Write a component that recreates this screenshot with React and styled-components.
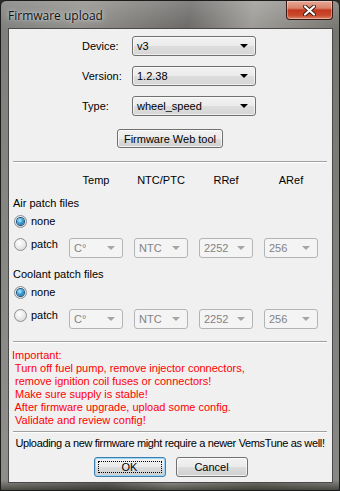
import React from 'react';
import styled, { createGlobalStyle } from 'styled-components';

const Global = createGlobalStyle`
  html, body {
    margin: 0;
    padding: 0;
    background: #2a2a2a;
  }
  body {
    font-family: "Liberation Sans", Arial, sans-serif;
    font-size: 11px;
  }
`;

const Window = styled.div`
  width: 340px;
  height: 491px;
  box-sizing: border-box;
  display: flex;
  flex-direction: column;
  border: 1px solid #1c1c1c;
  border-radius: 6px 6px 2px 2px;
  background:
    linear-gradient(180deg, rgba(255,255,255,0.18), rgba(255,255,255,0) 30px),
    linear-gradient(0deg, rgba(20,20,10,0.55), rgba(0,0,0,0) 10px),
    linear-gradient(100deg, #7d7d7b 0%, #8f8e8a 20%, #6a6866 45%, #9b9a96 60%, #76756f 80%, #8a8986 100%);
  overflow: hidden;
`;

const TitleBar = styled.div`
  height: 27px;
  display: flex;
  align-items: flex-start;
  justify-content: space-between;
  padding-left: 7px;
`;

const Title = styled.div`
  font-family: "Open Sans", "Noto Sans", sans-serif;
  font-size: 12px;
  color: #101010;
  margin-top: 6px;
  text-shadow: 0 0 6px rgba(255,255,255,0.7), 0 0 2px rgba(255,255,255,0.6);
`;

const CloseButton = styled.div`
  width: 45px;
  height: 18px;
  margin-right: 6px;
  border: 1px solid #3a1a14;
  border-top: none;
  border-radius: 0 0 4px 4px;
  background: linear-gradient(180deg, #e7a898 0%, #d9826a 40%, #c4381f 50%, #c94a2e 80%, #e0866a 100%);
  box-shadow: inset 0 0 0 1px rgba(255,255,255,0.35);
  display: flex;
  align-items: center;
  justify-content: center;
`;

const Client = styled.div`
  flex: 1;
  margin: 0 6px 7px 7px;
  border: 1px solid #4a4a4a;
  background: #f0f0f0;
  display: flex;
  flex-direction: column;
  align-items: stretch;
  padding: 7px 5px 0 4px;
  color: #000;
`;

const FormGrid = styled.div`
  display: grid;
  grid-template-columns: 50px 124px;
  row-gap: 10px;
  justify-content: start;
  align-items: center;
  padding-left: 69px;
`;

const Label = styled.div`
  line-height: 13px;
`;

const Combo = styled.div`
  box-sizing: border-box;
  width: ${p => p.width || 124}px;
  height: 20px;
  border: 1px solid ${p => (p.disabled ? '#b2b5b8' : '#707070')};
  border-radius: 3px;
  background: ${p =>
    p.disabled
      ? '#f4f4f4'
      : 'linear-gradient(180deg, #f2f2f2 0%, #ebebeb 50%, #dddddd 51%, #d6d6d6 100%)'};
  color: ${p => (p.disabled ? '#838383' : '#000')};
  display: flex;
  align-items: center;
  justify-content: space-between;
  padding: 0 5px 0 4px;
  box-shadow: ${p => (p.disabled ? 'none' : 'inset 0 0 0 1px rgba(255,255,255,0.6)')};
`;

const Arrow = styled.span`
  width: 0;
  height: 0;
  border-left: 4px solid transparent;
  border-right: 4px solid transparent;
  border-top: 4px solid ${p => (p.disabled ? '#a5a5a5' : '#000')};
  margin-right: 2px;
`;

const Button = styled.div`
  box-sizing: border-box;
  width: ${p => p.width}px;
  height: ${p => p.height || 20}px;
  border: 1px solid ${p => (p.focused ? '#3c7fb1' : '#707070')};
  border-radius: 3px;
  background: linear-gradient(180deg, #f2f2f2 0%, #ebebeb 50%, #dddddd 51%, #cfcfcf 100%);
  box-shadow: inset 0 0 0 1px ${p => (p.focused ? '#9fd5f5' : 'rgba(255,255,255,0.7)')};
  display: flex;
  align-items: center;
  justify-content: center;
  position: relative;
`;

const FocusRect = styled.span`
  position: absolute;
  inset: 3px;
  border: 1px dotted #000;
`;

const CenterRow = styled.div`
  display: flex;
  justify-content: center;
  gap: 10px;
  margin-top: ${p => p.top || 0}px;
  padding-left: ${p => p.shift || 0}px;
`;

const Separator = styled.div`
  height: 1px;
  background: #a0a0a0;
  border-bottom: 1px solid #fff;
  margin: ${p => p.top}px 0 0 0;
`;

const PatchGrid = styled.div`
  display: grid;
  grid-template-columns: 45px repeat(4, 54px);
  column-gap: 11px;
  align-items: center;
  margin-top: ${p => p.top || 0}px;
`;

const HeaderCell = styled.div`
  text-align: center;
  line-height: 13px;
`;

const SectionTitle = styled.div`
  line-height: 13px;
  margin-top: ${p => p.top}px;
`;

const RadioRow = styled.label`
  display: flex;
  align-items: center;
  gap: 4px;
  line-height: 13px;
  margin-top: ${p => p.top || 0}px;
  align-self: start;
`;

const RadioCircle = styled.span`
  box-sizing: border-box;
  width: 13px;
  height: 13px;
  border-radius: 50%;
  border: 1px solid #8c8f91;
  background: radial-gradient(circle at 40% 35%, #ffffff 0%, #eaeaea 50%, #cfcfcf 100%);
  display: flex;
  align-items: center;
  justify-content: center;
  margin-left: 1px;
`;

const RadioDot = styled.span`
  width: 7px;
  height: 7px;
  border-radius: 50%;
  background: radial-gradient(circle at 40% 35%, #b9f0ff 0%, #3ea0d8 45%, #0d4f86 100%);
  box-shadow: 0 0 0 1px #1a4f7a;
`;

const Warning = styled.div`
  color: #ff0000;
  line-height: 13px;
  margin: 6px 0 0 -1px;
  white-space: pre;
`;

const Note = styled.div`
  text-align: center;
  line-height: 13px;
  margin-top: 4px;
  white-space: nowrap;
  letter-spacing: -0.35px;
  margin-left: -4px;
  margin-right: -4px;
`;

const Radio = ({ checked, label, top }) => (
  <RadioRow top={top}>
    <RadioCircle>{checked && <RadioDot />}</RadioCircle>
    {label}
  </RadioRow>
);

const PatchSection = ({ title, top }) => (
  <>
    <SectionTitle top={top}>{title}</SectionTitle>
    <Radio checked label="none" top={5} />
    <PatchGrid top={10}>
      <Radio label="patch" />
      {['C°', 'NTC', '2252', '256'].map(v => (
        <Combo key={v} width={54} disabled>
          {v}
          <Arrow disabled />
        </Combo>
      ))}
    </PatchGrid>
  </>
);

const fields = [
  ['Device:', 'v3'],
  ['Version:', '1.2.38'],
  ['Type:', 'wheel_speed'],
];

const warning = `Important:
 Turn off fuel pump, remove injector connectors,
 remove ignition coil fuses or connectors!
 Make sure supply is stable!
 After firmware upgrade, upload some config.
 Validate and review config!`;

export default function App() {
  return (
    <>
      <Global />
      <Window>
        <TitleBar>
          <Title>Firmware upload</Title>
          <CloseButton>
            <svg width="13" height="11" viewBox="0 0 13 11">
              <path
                d="M2 1.5 L11 9.5 M11 1.5 L2 9.5"
                stroke="#3b1d16"
                strokeWidth="4"
                strokeLinecap="round"
              />
              <path
                d="M2 1.5 L11 9.5 M11 1.5 L2 9.5"
                stroke="#fff"
                strokeWidth="2.2"
                strokeLinecap="round"
              />
            </svg>
          </CloseButton>
        </TitleBar>
        <Client>
          <FormGrid>
            {fields.map(([l, v]) => (
              <React.Fragment key={l}>
                <Label>{l}</Label>
                <Combo>
                  {v}
                  <Arrow />
                </Combo>
              </React.Fragment>
            ))}
          </FormGrid>
          <CenterRow top={13}>
            <Button width={106} height={19}>Firmware Web tool</Button>
          </CenterRow>
          <Separator top={13} />
          <PatchGrid top={11}>
            <span />
            <HeaderCell>Temp</HeaderCell>
            <HeaderCell>NTC/PTC</HeaderCell>
            <HeaderCell>RRef</HeaderCell>
            <HeaderCell>ARef</HeaderCell>
          </PatchGrid>
          <PatchSection title="Air patch files" top={10} />
          <PatchSection title="Coolant patch files" top={10} />
          <Separator top={12} />
          <Warning>{warning}</Warning>
          <Separator top={4} />
          <Note>Uploading a new firmware might require a newer VemsTune as well!</Note>
          <CenterRow top={7} shift={1}>
            <Button width={72} focused>
              <FocusRect />
              OK
            </Button>
            <Button width={72}>Cancel</Button>
          </CenterRow>
        </Client>
      </Window>
    </>
  );
}
